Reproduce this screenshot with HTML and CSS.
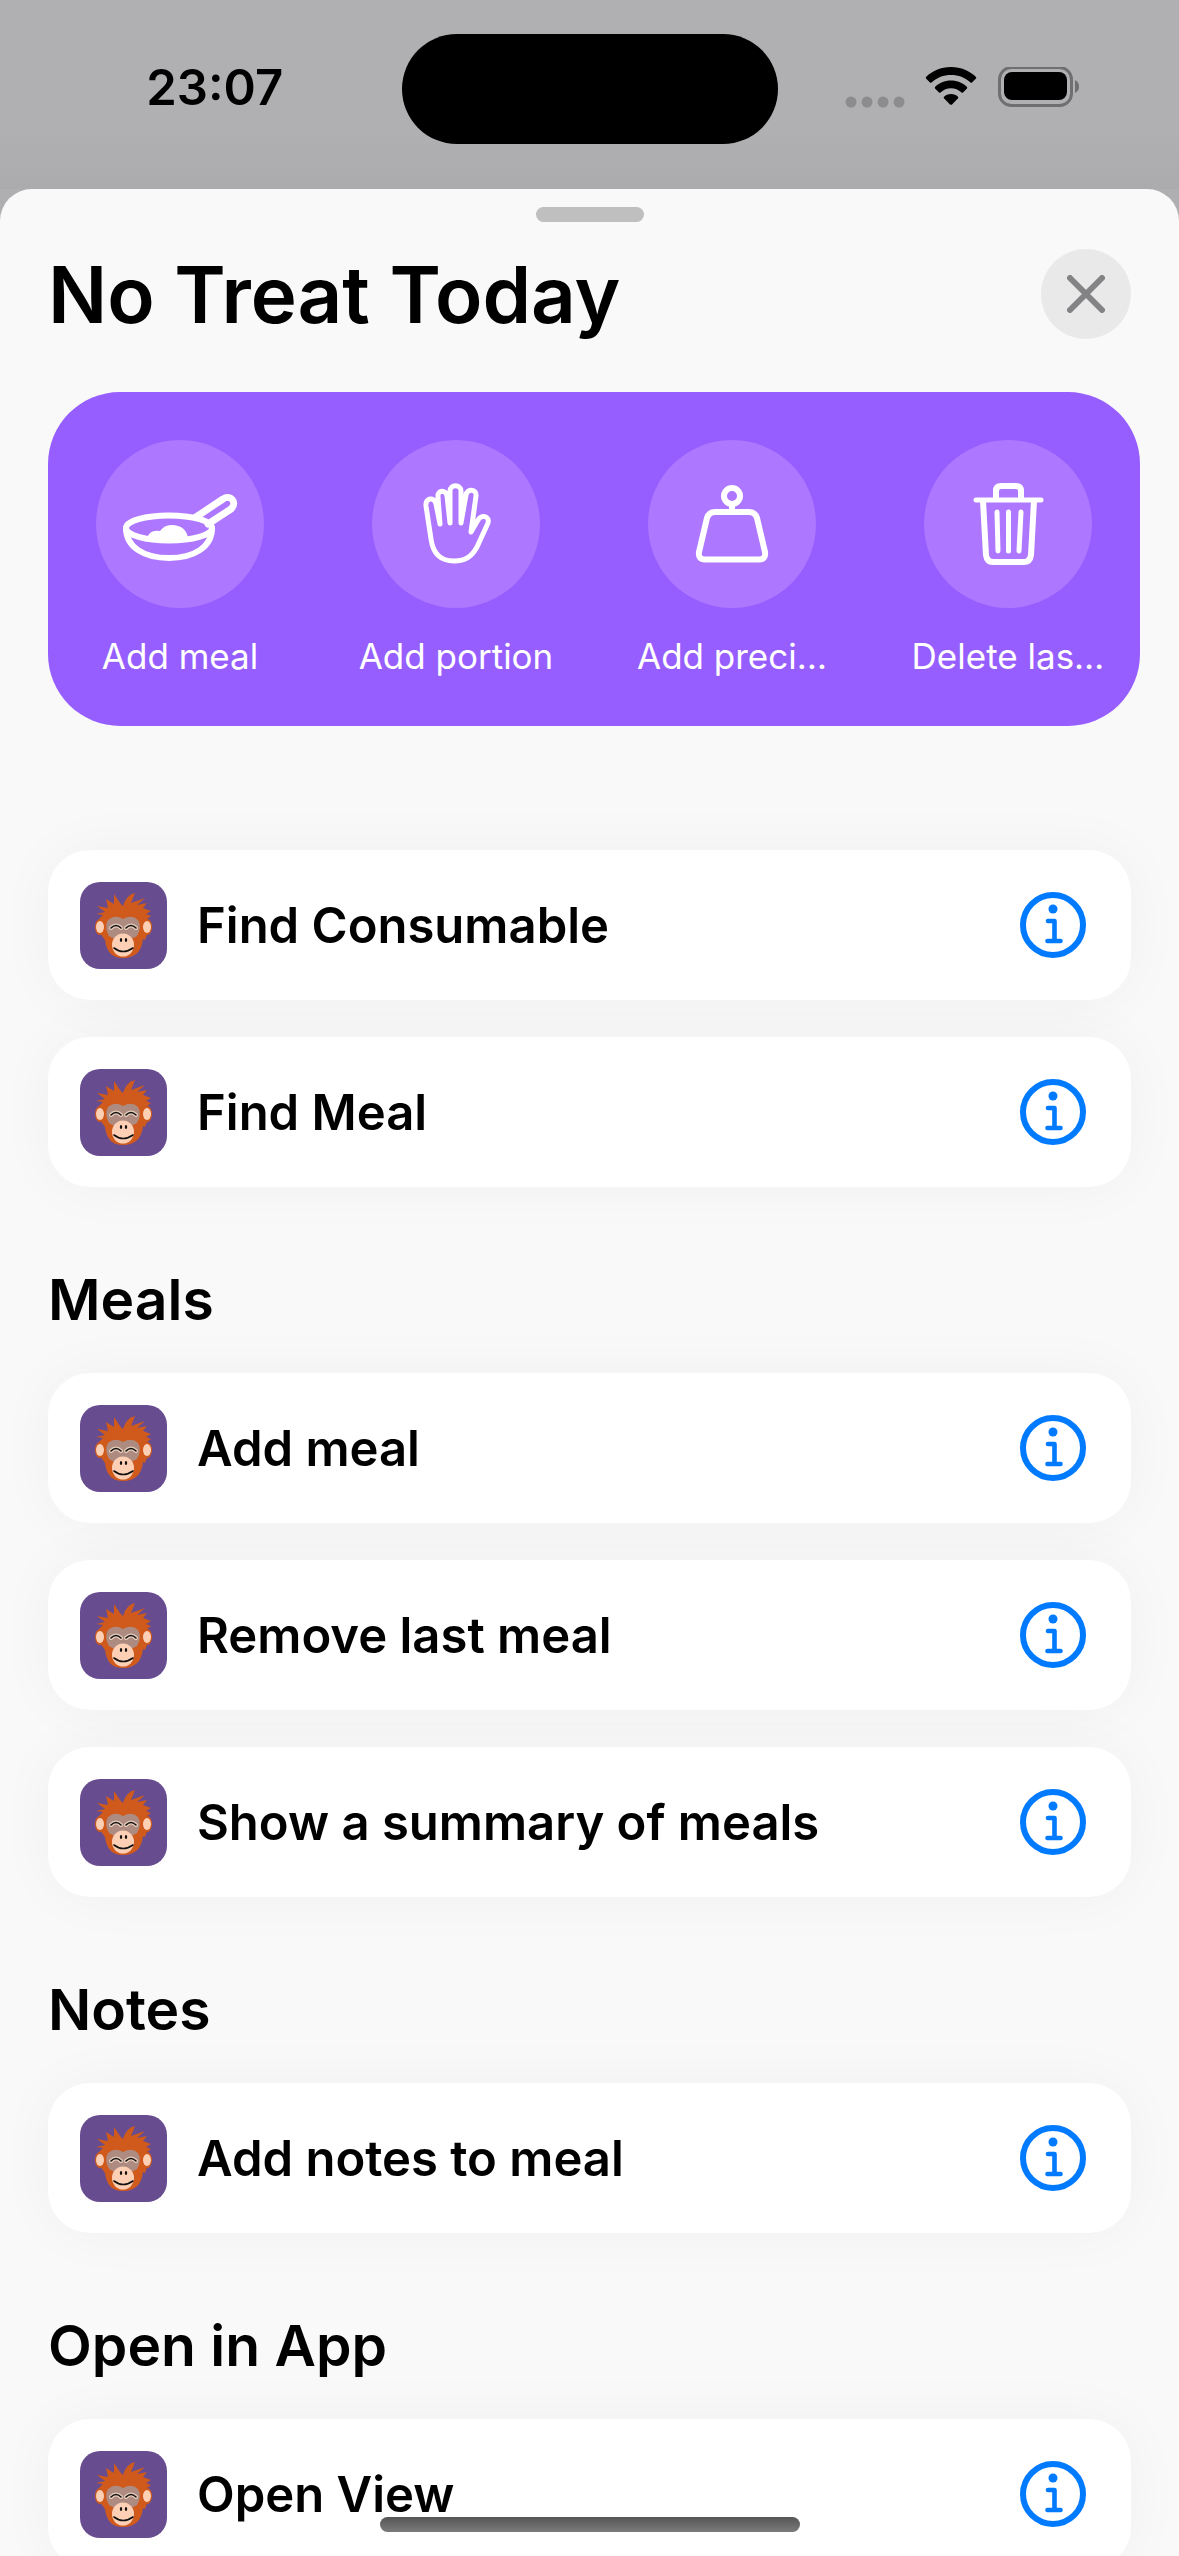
FILE: index.html
```
<!DOCTYPE html>
<html lang="en">

<head>
    <meta charset="UTF-8">
    <meta name="viewport" content="width=device-width, initial-scale=1">
    <title>No Treat Today</title>
    <link rel="stylesheet" href="styles.css">
</head>

<body>
    <!-- shared icons -->
    <svg class="sprite" aria-hidden="true">
        <symbol id="monkey" viewBox="0 0 87 87">
            <rect width="87" height="87" fill="#684c90" />
            <path fill="#cf5a1b" d="M19 37 L23 33 L16 32 L25 30 L17 24 L28 26 L26 17 L34 22 L34 12 L40 21 L43 24 Q46 13 55 11 L51 21 L65 16 L57 23 L67 21 L63 26 L71 29 L66 32 L71 34 L67 37 L68 50 L65 58 L63 57 Q61 76 43 76 Q27 76 25 58 L20 51 Z" />
            <ellipse cx="20" cy="45" rx="5" ry="8" fill="#cf5a1b" />
            <ellipse cx="67" cy="45" rx="5" ry="8" fill="#cf5a1b" />
            <ellipse cx="20" cy="45" rx="4" ry="6" fill="#fdcfb4" />
            <ellipse cx="67" cy="45" rx="4" ry="6" fill="#fdcfb4" />
            <path fill="#ad8b81" d="M43 37 Q52 32 58 38 Q62 45 57 54 Q50 59 43 56 Q35 59 29 54 Q24 45 28 38 Q35 32 43 37 Z" />
            <ellipse cx="43" cy="63" rx="11" ry="11.500" fill="#fdcfb4" />
            <path fill="none" stroke="#e8cdbb" stroke-width="4" stroke-linecap="round" d="M31 46 Q36 41 41 46 M46 46 Q51 41 56 46" />
            <path fill="none" stroke="#111" stroke-width="1.600" stroke-linecap="round" d="M31 46 Q36 41 41 46 M46 46 Q51 41 56 46 M34 66 Q43 73 53 66" />
            <ellipse cx="41" cy="58" rx="1.200" ry="2" fill="#111" />
            <ellipse cx="46" cy="58" rx="1.200" ry="2" fill="#111" />
        </symbol>
        <symbol id="info" viewBox="0 0 66 66">
            <circle cx="33" cy="33" r="30" fill="none" stroke="#007aff" stroke-width="6" />
            <circle cx="33" cy="17" r="4.500" fill="#007aff" />
            <path fill="none" stroke="#007aff" stroke-width="4.600" stroke-linecap="round" stroke-linejoin="round" d="M28 29 H34.500 V49 M27.500 49 H40.500" />
        </symbol>
    </svg>

    <header class="status">
        <span class="time">23:07</span>
        <div class="island"></div>
        <div class="indicators">
            <svg width="60" height="42" viewBox="0 0 60 42" fill="#8c8c8e">
                <circle cx="6" cy="35" r="5.500" />
                <circle cx="22" cy="35" r="5.500" />
                <circle cx="38" cy="35" r="5.500" />
                <circle cx="54" cy="35" r="5.500" />
            </svg>
            <svg width="52" height="42" viewBox="0 0 52 42" fill="#000">
                <path d="M26 0 C36 0 45 4 51 10 Q51.500 10.800 51 11.500 L47 15.500 Q46.400 16 45.500 15.400 C40 10.500 33.500 8 26 8 C18.500 8 12 10.500 6.500 15.400 Q5.600 16 5 15.500 L1 11.500 Q.5 10.800 1 10 C7 4 16 0 26 0 Z" />
                <path d="M26 13.500 C32.500 13.500 38 16 42 20 Q42.500 20.800 42 21.500 L38 25.500 Q37.300 26 36.500 25.500 C33.500 22.800 30 21.300 26 21.300 C22 21.300 18.500 22.800 15.500 25.500 Q14.700 26 14 25.500 L10 21.500 Q9.500 20.800 10 20 C14 16 19.500 13.500 26 13.500 Z" />
                <path d="M26 27 C29 27 31 28 33 29.700 Q33.600 30.500 33 31.200 L27 37.400 Q26 38.300 25 37.400 L19 31.200 Q18.400 30.500 19 29.700 C21 28 23 27 26 27 Z" />
            </svg>
            <svg width="84" height="42" viewBox="0 0 84 42">
                <rect x="2.500" y="0.500" width="72" height="38" rx="12" fill="none" stroke="#6f6f71" stroke-width="3" />
                <rect x="7" y="5" width="63" height="28" rx="8" fill="#000" />
                <path d="M78 13 Q82 15 82 19.500 Q82 24 78 26 Z" fill="#6f6f71" />
            </svg>
        </div>
    </header>

    <main class="sheet">
        <div class="grabber"></div>
        <div class="title-row">
            <h1>No Treat Today</h1>
            <button class="close" aria-label="Close">
                <svg width="38" height="38" viewBox="0 0 38 38" fill="none" stroke="#838385" stroke-width="6" stroke-linecap="round">
                    <path d="M3 3 L35 35 M35 3 L3 35" />
                </svg>
            </button>
        </div>

        <div class="actions">
            <button class="action">
                <span class="bubble">
                    <svg width="168" height="168" viewBox="0 0 168 168" fill="none" stroke="#fff" stroke-width="6" stroke-linecap="round" stroke-linejoin="round">
                        <ellipse cx="73" cy="88" rx="43" ry="12.500" />
                        <path d="M30 88 C30 107 48 118 73 118 C98 118 116 107 116 88" />
                        <path d="M100 77 L127 59 C134 54 142 62 135 69 L112 84" stroke-width="7" />
                        <path fill="#fff" stroke="none" d="M51 98 Q54 89 64 91 Q69 84 77 85 Q90 86 92 98 Q73 102 51 98 Z" />
                    </svg>
                </span>
                <span class="label">Add meal</span>
            </button>
            <button class="action">
                <span class="bubble">
                    <svg width="168" height="168" viewBox="0 0 168 168" fill="none" stroke="#fff" stroke-width="5" stroke-linecap="round" stroke-linejoin="round">
                        <path d="M68 84 L64 64 C62 56 53 58 54 66 L59 99 C61 114 69 121 82 121 C94 121 100 116 105 107 L116 83 C118 76 109 74 106 80 L99 92 L104 56 C105 49 95 48 94 55 L89 83 L89 51 C89 44 78 44 78 51 L78 83 L75 56 C74 49 65 50 66 57 L68 84" />
                    </svg>
                </span>
                <span class="label">Add portion</span>
            </button>
            <button class="action">
                <span class="bubble">
                    <svg width="168" height="168" viewBox="0 0 168 168" fill="none" stroke="#fff" stroke-width="6" stroke-linecap="round" stroke-linejoin="round">
                        <circle cx="84" cy="56" r="8" />
                        <path d="M84 65 V71 M67 72 H101 Q107 72 109 78 L117 112 Q118 119.500 111 119.500 H57 Q50 119.500 51 112 L59 78 Q61 72 67 72 Z" />
                    </svg>
                </span>
                <span class="label">Add preci…</span>
            </button>
            <button class="action">
                <span class="bubble">
                    <svg width="168" height="168" viewBox="0 0 168 168" fill="none" stroke="#fff" stroke-width="6" stroke-linecap="round" stroke-linejoin="round">
                        <path d="M52 60 H117" stroke-width="5" />
                        <path d="M72 59 V51 Q72 46 77 46 H92 Q97 46 97 51 V59" />
                        <path d="M59 61 L62 115 Q63 122 69 122 H100 Q106 122 107 115 L110 61" />
                        <path d="M73 72 L74 111 M84.500 72 V111 M97 72 L95 111" stroke-width="5" />
                    </svg>
                </span>
                <span class="label">Delete las…</span>
            </button>
        </div>

        <section class="group first">
            <div class="card">
                <svg class="app"><use href="#monkey" /></svg>
                <span class="name">Find Consumable</span>
                <button class="info" aria-label="Info"><svg><use href="#info" /></svg></button>
            </div>
            <div class="card">
                <svg class="app"><use href="#monkey" /></svg>
                <span class="name">Find Meal</span>
                <button class="info" aria-label="Info"><svg><use href="#info" /></svg></button>
            </div>
        </section>

        <h2>Meals</h2>
        <section class="group">
            <div class="card">
                <svg class="app"><use href="#monkey" /></svg>
                <span class="name">Add meal</span>
                <button class="info" aria-label="Info"><svg><use href="#info" /></svg></button>
            </div>
            <div class="card">
                <svg class="app"><use href="#monkey" /></svg>
                <span class="name">Remove last meal</span>
                <button class="info" aria-label="Info"><svg><use href="#info" /></svg></button>
            </div>
            <div class="card">
                <svg class="app"><use href="#monkey" /></svg>
                <span class="name">Show a summary of meals</span>
                <button class="info" aria-label="Info"><svg><use href="#info" /></svg></button>
            </div>
        </section>

        <h2>Notes</h2>
        <section class="group">
            <div class="card">
                <svg class="app"><use href="#monkey" /></svg>
                <span class="name">Add notes to meal</span>
                <button class="info" aria-label="Info"><svg><use href="#info" /></svg></button>
            </div>
        </section>

        <h2>Open in App</h2>
        <section class="group">
            <div class="card">
                <svg class="app"><use href="#monkey" /></svg>
                <span class="name">Open View</span>
                <button class="info" aria-label="Info"><svg><use href="#info" /></svg></button>
            </div>
        </section>
    </main>

    <div class="home-bar"></div>
</body>

</html>
```
FILE: styles.css
```
* {
    box-sizing: border-box;
}

body {
    margin: 0;
    height: 100vh;
    overflow: hidden;
    display: flex;
    flex-direction: column;
    background: #afafb1;
    color: #000;
    font-family: Inter, "Liberation Sans", sans-serif;
}

button {
    border: 0;
    padding: 0;
    background: none;
    color: inherit;
    font: inherit;
    cursor: pointer;
}

svg {
    display: block;
}

.sprite {
    position: absolute;
    width: 0;
    height: 0;
}

/* status bar */
.status {
    display: grid;
    grid-template-columns: 1fr 376px 1fr;
    align-items: center;
    height: 189px;
    flex: none;
    padding-bottom: 12px;
    background: linear-gradient(#b0b0b2 70%, #ababad);
}

.time {
    padding: 0 0 2px 28px;
    text-align: center;
    font-size: 49px;
    font-weight: 600;
}

.island {
    height: 110px;
    border-radius: 55px;
    background: #000;
}

.indicators {
    display: flex;
    justify-content: flex-end;
    gap: 20px;
    padding: 0 98px 2px 0;
}

/* sheet */
.sheet {
    flex: 1;
    min-height: 0;
    overflow: hidden;
    padding: 18px 48px 0;
    border-radius: 32px 32px 0 0;
    background: #f9f9f9;
}

.grabber {
    width: 108px;
    height: 15px;
    margin: 0 auto;
    border-radius: 8px;
    background: #bfbfbf;
}

.title-row {
    display: flex;
    align-items: center;
    justify-content: space-between;
    height: 144px;
}

h1 {
    margin: 0;
    font-size: 78px;
    font-weight: 600;
}

.close {
    display: grid;
    place-items: center;
    width: 90px;
    height: 90px;
    border-radius: 50%;
    background: #e9e9e9;
}

.actions {
    display: grid;
    grid-template-columns: repeat(4, 1fr);
    column-gap: 72px;
    margin: 26px -9px 0 0;
    padding: 48px 30px;
    height: 334px;
    border-radius: 72px;
    background: #965eff;
    color: #fff;
}

.action {
    display: flex;
    flex-direction: column;
    align-items: center;
    gap: 24px;
    white-space: nowrap;
}

.bubble {
    border-radius: 50%;
    background: #ae77ff;
}

.label {
    font-size: 35px;
    line-height: 48px;
}

/* lists */
.group {
    display: flex;
    flex-direction: column;
    gap: 37px;
}

.first {
    margin-top: 124px;
}

.card {
    display: flex;
    align-items: center;
    height: 150px;
    padding: 0 45px 0 32px;
    border-radius: 42px;
    background: #fff;
    box-shadow: 0 0 60px rgba(0, 0, 0, 0.04);
}

.app {
    width: 87px;
    height: 87px;
    border-radius: 20px;
}

.name {
    flex: 1;
    padding-left: 30px;
    font-size: 49px;
    font-weight: 600;
}

.info svg {
    width: 66px;
    height: 66px;
}

h2 {
    margin: 78px 0 38px;
    font-size: 57px;
    line-height: 70px;
    font-weight: 600;
}

.home-bar {
    position: fixed;
    bottom: 24px;
    left: 50%;
    width: 420px;
    height: 15px;
    margin-left: -210px;
    border-radius: 8px;
    background: linear-gradient(#555, #7b7b7b);
}
```
